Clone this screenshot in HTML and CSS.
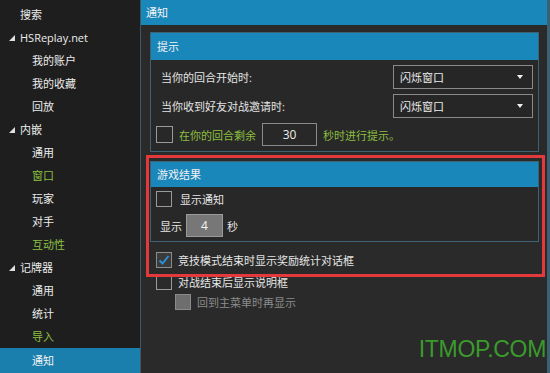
FILE: index.html
```html
<!DOCTYPE html>
<html lang="zh-CN">
<head>
<meta charset="utf-8">
<title>通知</title>
<link rel="stylesheet" href="styles.css">
</head>
<body>
<div class="app">
  <aside class="sidebar">
    <div class="item lvl0">搜索</div>
    <div class="item lvl0"><svg class="tri" width="6" height="6" viewBox="0 0 6 6"><polygon points="6,0 6,6 0,6"/></svg>HSReplay.net</div>
    <div class="item lvl1">我的账户</div>
    <div class="item lvl1">我的收藏</div>
    <div class="item lvl1">回放</div>
    <div class="item lvl0"><svg class="tri" width="6" height="6" viewBox="0 0 6 6"><polygon points="6,0 6,6 0,6"/></svg>内嵌</div>
    <div class="item lvl1">通用</div>
    <div class="item lvl1 green">窗口</div>
    <div class="item lvl1">玩家</div>
    <div class="item lvl1">对手</div>
    <div class="item lvl1 green">互动性</div>
    <div class="item lvl0"><svg class="tri" width="6" height="6" viewBox="0 0 6 6"><polygon points="6,0 6,6 0,6"/></svg>记牌器</div>
    <div class="item lvl1">通用</div>
    <div class="item lvl1">统计</div>
    <div class="item lvl1 green">导入</div>
    <div class="item lvl1 selected">通知</div>
  </aside>
  <main class="main">
    <div class="title">通知</div>
    <div class="content">
      <section class="panel tips">
        <div class="panel-head">提示</div>
        <div class="panel-body tips-body">
          <div class="label">当你的回合开始时:</div>
          <div class="select"><span>闪烁窗口</span><i class="caret"></i></div>
          <div class="label">当你收到好友对战邀请时:</div>
          <div class="select"><span>闪烁窗口</span><i class="caret"></i></div>
          <div class="turn-row">
            <span class="box"></span>
            <span class="green">在你的回合剩余</span>
            <span class="num">30</span>
            <span class="green">秒时进行提示。</span>
          </div>
        </div>
      </section>
      <div class="highlight">
        <section class="panel results">
          <div class="panel-head short">游戏结果</div>
          <div class="panel-body results-body">
            <div class="check-row"><span class="box"></span><span class="txt-wide">显示通知</span></div>
            <div class="show-row">
              <span>显示</span>
              <span class="num grey">4</span>
              <span>秒</span>
            </div>
          </div>
        </section>
        <div class="check-row outer arena">
          <span class="box checked"><svg width="14" height="14" viewBox="0 0 14 14"><path d="M2.5 7.5 L5.5 10.5 L11.5 3" fill="none" stroke="#2b8fd6" stroke-width="2"/></svg></span>
          <span>竞技模式结束时显示奖励统计对话框</span>
        </div>
      </div>
      <div class="check-row outer after">
        <span class="box"></span>
        <span>对战结束后显示说明框</span>
      </div>
      <div class="check-row outer sub">
        <span class="box filled"></span>
        <span class="dim">回到主菜单时再显示</span>
      </div>
    </div>
  </main>
  <div class="edge"></div>
  <div class="watermark">ITMOP.COM</div>
</div>
</body>
</html>
```

FILE: styles.css
```css
* { box-sizing: border-box; }
html, body { margin: 0; padding: 0; }
body {
  width: 550px;
  height: 373px;
  overflow: hidden;
  background: #2a2a2a;
  font-family: "Open Sans", "Noto Sans CJK SC", sans-serif;
  font-size: 11px;
  color: #e6e6e6;
}
.app {
  position: relative;
  display: flex;
  width: 550px;
  height: 373px;
}
.sidebar {
  width: 141px;
  flex: none;
  background: #1e1e1e;
  border-right: 1px solid #3d5767;
  padding-top: 3px;
  display: flex;
  flex-direction: column;
}
.item {
  height: 23px;
  line-height: 23px;
  display: flex;
  align-items: center;
  color: #ececec;
  white-space: nowrap;
}
.item.lvl0 { padding-left: 20px; position: relative; }
.item.lvl1 { padding-left: 32px; }
.item .tri {
  position: absolute;
  left: 9px;
  top: 9px;
  fill: #e0e0e0;
}
.item.green { color: #8cc043; }
.item.selected {
  background: #1b7fae;
  height: 25px;
  color: #f2f2f2;
}
.main {
  flex: 1;
  display: flex;
  flex-direction: column;
  background: #2a2a2a;
}
.title {
  height: 25px;
  line-height: 25px;
  background: #1a87bb;
  padding-left: 5px;
  color: #f4f4f4;
}
.content {
  padding: 7px 8px 0 9px;
  display: flex;
  flex-direction: column;
}
.panel {
  border: 1px solid #3c6274;
  background: #282828;
}
.panel-head {
  height: 27px;
  line-height: 27px;
  background: #1a87bb;
  padding-left: 6px;
  color: #f2f2f2;
}
.panel-head.short { height: 25px; line-height: 25px; }
.tips-body {
  padding: 5px 5px 5px 5px;
  display: grid;
  grid-template-columns: 1fr 140px;
  grid-auto-rows: auto;
  row-gap: 5px;
  align-items: center;
}
.label { padding-left: 5px; color: #e4e4e4; }
.select {
  height: 24px;
  border: 1px solid #8a8a8a;
  background: #262626;
  display: flex;
  align-items: center;
  justify-content: space-between;
  padding: 0 9px 0 6px;
  color: #ececec;
}
.caret {
  width: 0;
  height: 0;
  border-left: 3px solid transparent;
  border-right: 3px solid transparent;
  border-top: 4px solid #f0f0f0;
}
.turn-row {
  grid-column: 1 / 3;
  display: flex;
  align-items: center;
  height: 23px;
  gap: 6px;
}
.turn-row .box { width: 17px; height: 17px; margin-right: 0; }
.green { color: #8cbf3f; }
.box {
  width: 16px;
  height: 16px;
  flex: none;
  border: 1px solid #9a9a9a;
  background: transparent;
  display: flex;
  align-items: center;
  justify-content: center;
}
.box.checked { background: #3a3a3a; border-color: #8c8c8c; }
.box.filled { background: #6e6e6e; border-color: #8a8a8a; }
.num {
  width: 55px;
  height: 23px;
  border: 1px solid #8a8a8a;
  display: flex;
  align-items: center;
  justify-content: center;
  color: #ececec;
  font-size: 12px;
}
.num.grey {
  width: 37px;
  background: #777777;
  border-color: #9a9a9a;
  color: #f4f4f4;
}
.highlight {
  position: relative;
  margin-top: 9px;
  display: flex;
  flex-direction: column;
}
.highlight::after {
  content: "";
  position: absolute;
  top: -6px;
  left: -4px;
  right: -6px;
  bottom: -9px;
  border: 3px solid #e3393c;
  pointer-events: none;
}
.results-body {
  padding: 4px 5px 4px 5px;
  display: flex;
  flex-direction: column;
  gap: 7px;
}
.check-row {
  display: flex;
  align-items: center;
  height: 16px;
  gap: 6px;
}
.check-row .txt-wide { margin-left: 2px; }
.show-row {
  display: flex;
  align-items: center;
  gap: 4px;
  padding-left: 4px;
  height: 23px;
}
.check-row.outer { padding-left: 6px; }
.check-row.arena { margin-top: 10px; }
.check-row.after { margin-top: 6px; }
.check-row.sub { margin-top: 4px; padding-left: 25px; }
.dim { color: #8c8c8c; }
.edge {
  width: 3px;
  flex: none;
  background: #3a6072;
}
.watermark {
  position: absolute;
  right: 4px;
  bottom: 11px;
  font-family: "Liberation Sans", Arial, sans-serif;
  font-size: 23px;
  line-height: 26px;
  color: #3a9b2c;
  letter-spacing: -0.3px;
}
```
